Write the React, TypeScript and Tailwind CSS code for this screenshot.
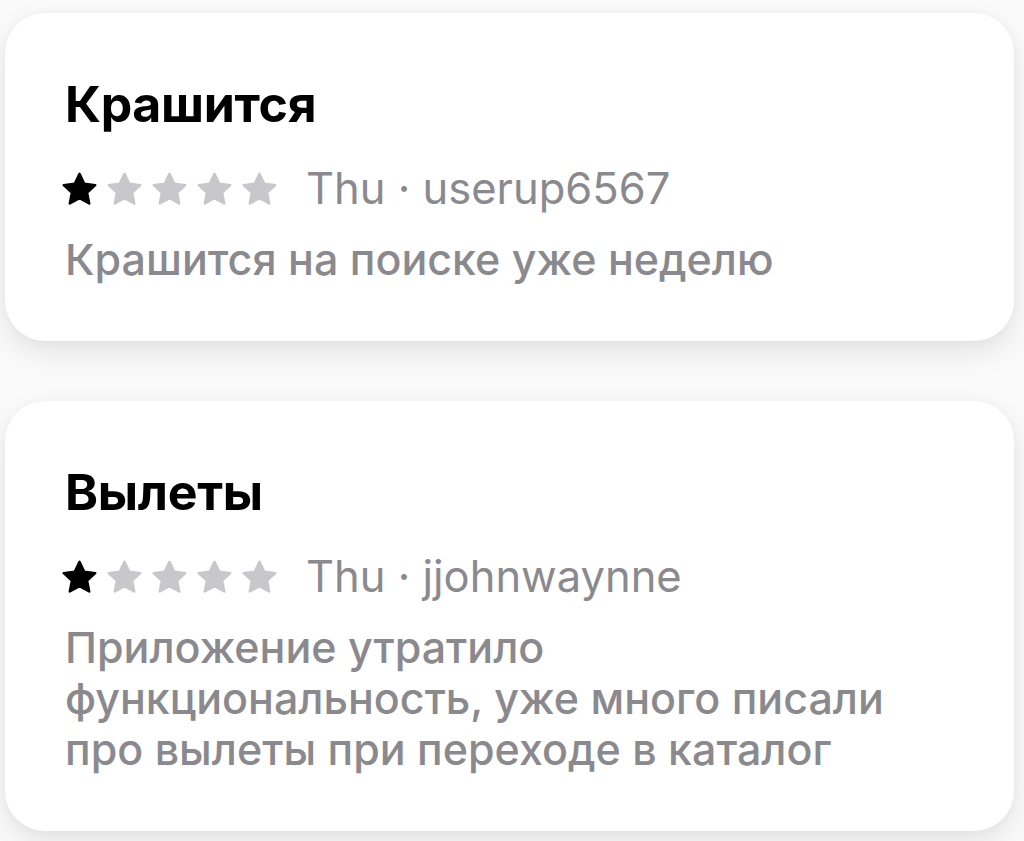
const reviews = [
  {
    title: 'Крашится',
    rating: 1,
    day: 'Thu',
    user: 'userup6567',
    lines: ['Крашится на поиске уже неделю'],
  },
  {
    title: 'Вылеты',
    rating: 1,
    day: 'Thu',
    user: 'jjohnwaynne',
    lines: [
      'Приложение утратило',
      'функциональность, уже много писали',
      'про вылеты при переходе в каталог',
    ],
  },
];

function Star({ filled }: { filled: boolean }) {
  const color = filled ? '#000000' : '#c7c7cc';
  return (
    <svg viewBox="2 2.2 20 19" className="w-[35px] h-[33px] shrink-0">
      <path
        d="M12 3.2l2.75 5.75 6.3.8-4.65 4.35 1.2 6.25L12 17.3l-5.6 3.05 1.2-6.25-4.65-4.35 6.3-.8z"
        fill={color}
        stroke={color}
        strokeWidth={1.4}
        strokeLinejoin="round"
      />
    </svg>
  );
}

export default function App() {
  return (
    <div
      className="min-h-[841px] w-[1024px] bg-[#fafafa] pt-[13px] flex flex-col gap-[60px] overflow-hidden"
      style={{ fontFamily: 'Inter, "Noto Sans", sans-serif' }}
    >
      {reviews.map((r) => (
        <div
          key={r.title}
          className="ml-[5px] w-[1009px] bg-white rounded-[40px] pl-[60px] pr-[50px] pt-[63px] pb-[56px] shadow-[0_12px_28px_rgba(0,0,0,0.09),0_0_12px_rgba(0,0,0,0.03)]"
        >
          <h2 className="text-[50px] leading-[56px] font-bold text-black tracking-[-0.3px]">{r.title}</h2>
          <div className="flex items-center h-[50px] mt-[31px]">
            <div className="flex gap-[10px] -ml-[3px]">
              {[0, 1, 2, 3, 4].map((i) => (
                <Star key={i} filled={i < r.rating} />
              ))}
            </div>
            <span className="ml-[29px] text-[43.5px] leading-[50px] text-[#8a8a8e] whitespace-nowrap">
              {r.day} · {r.user}
            </span>
          </div>
          <p className="mt-[21px] text-[43px] leading-[51px] text-[#8a8a8e] font-medium whitespace-nowrap">
            {r.lines.map((l, i) => (
              <span key={i} className="block">
                {l}
              </span>
            ))}
          </p>
        </div>
      ))}
    </div>
  );
}
